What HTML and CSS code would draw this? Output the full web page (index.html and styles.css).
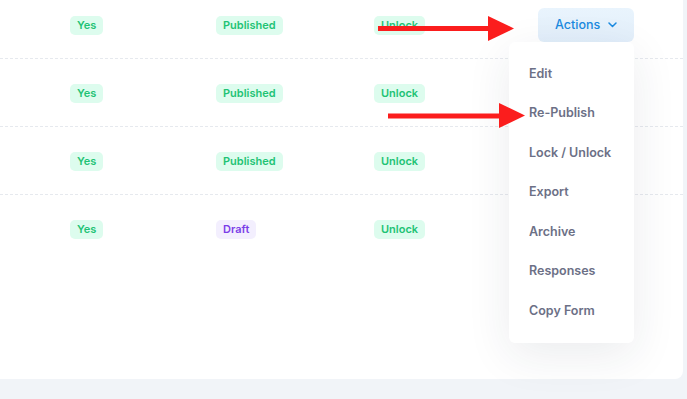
FILE: index.html
```html
<!DOCTYPE html>
<html>
<head>
<meta charset="utf-8">
<link rel="stylesheet" href="styles.css">
</head>
<body>
<div class="page">
  <div class="card">
    <div class="row">
      <div class="cell"><span class="badge green">Yes</span></div>
      <div class="cell"><span class="badge green">Published</span></div>
      <div class="cell"><span class="badge green">Unlock</span></div>
      <div class="cell">
        <button class="actions">Actions
          <svg class="chev" width="9" height="6" viewBox="0 0 9 6"><path d="M1 1l3.5 3.5L8 1" fill="none" stroke="currentColor" stroke-width="1.5" stroke-linecap="round" stroke-linejoin="round"/></svg>
        </button>
      </div>
    </div>
    <div class="row">
      <div class="cell"><span class="badge green">Yes</span></div>
      <div class="cell"><span class="badge green">Published</span></div>
      <div class="cell"><span class="badge green">Unlock</span></div>
      <div class="cell"></div>
    </div>
    <div class="row">
      <div class="cell"><span class="badge green">Yes</span></div>
      <div class="cell"><span class="badge green">Published</span></div>
      <div class="cell"><span class="badge green">Unlock</span></div>
      <div class="cell"></div>
    </div>
    <div class="row last">
      <div class="cell"><span class="badge green">Yes</span></div>
      <div class="cell"><span class="badge purple">Draft</span></div>
      <div class="cell"><span class="badge green">Unlock</span></div>
      <div class="cell"></div>
    </div>
  </div>

  <ul class="menu">
    <li>Edit</li>
    <li>Re-Publish</li>
    <li>Lock / Unlock</li>
    <li>Export</li>
    <li>Archive</li>
    <li>Responses</li>
    <li>Copy Form</li>
  </ul>

  <svg class="arrow arrow-1" width="138" height="26" viewBox="0 0 138 26">
    <rect x="0" y="10" width="114" height="5" fill="#fb1d1d"/>
    <polygon points="110,0 136,12.5 110,25" fill="#fb1d1d"/>
  </svg>
  <svg class="arrow arrow-2" width="138" height="26" viewBox="0 0 138 26">
    <rect x="0" y="10.5" width="114" height="5" fill="#fb1d1d"/>
    <polygon points="111,0 137,12.5 111,25" fill="#fb1d1d"/>
  </svg>
</div>
</body>
</html>
```

FILE: styles.css
```css
* { box-sizing: border-box; }
html, body {
  margin: 0;
  padding: 0;
  background: #f1f4f8;
  font-family: Inter, "Noto Sans", "Liberation Sans", sans-serif;
  overflow: hidden;
}
.page {
  position: relative;
  display: flow-root;
  width: 687px;
  height: 399px;
}
.card {
  width: 683px;
  margin-top: -9px;
  background: #ffffff;
  border-radius: 0 0 8px 0;
  padding-bottom: 116px;
}
.row {
  display: grid;
  grid-template-columns: 146px 158px 164px 1fr;
  padding-left: 70px;
  padding-top: 1px;
  height: 68px;
  align-items: center;
  border-bottom: 1px dashed #e6e9ee;
}
.row.last { border-bottom: 1px solid transparent; }
.cell {
  display: flex;
  align-items: center;
}
.badge {
  display: inline-block;
  font-size: 11px;
  font-weight: 600;
  line-height: 19px;
  height: 19px;
  padding: 0 7px;
  border-radius: 5px;
}
.badge.green {
  background: #ddfcee;
  color: #1fc375;
}
.badge.purple {
  background: #f3effe;
  color: #7b3ee8;
}
.actions {
  display: flex;
  align-items: center;
  gap: 8px;
  width: 96px;
  height: 34px;
  margin-top: -1px;
  padding: 0 0 0 17px;
  border: 0;
  border-radius: 6px;
  background: linear-gradient(180deg, #e9f4fd 0%, #e2eefa 100%);
  color: #1b8ae0;
  font-family: inherit;
  font-size: 12.5px;
  font-weight: 500;
}
.chev { margin-top: 1px; }
.menu {
  position: absolute;
  left: 509px;
  top: 42px;
  width: 125px;
  height: 301px;
  margin: 0;
  padding: 11.5px 0 0 20px;
  list-style: none;
  background: #ffffff;
  border-radius: 6px;
  box-shadow: 0 12px 45px rgba(30, 40, 70, 0.09);
}
.menu li {
  height: 39.5px;
  line-height: 39.5px;
  font-size: 12.5px;
  font-weight: 600;
  color: #6c7086;
  white-space: nowrap;
}
.arrow { position: absolute; }
.arrow-1 { left: 378px; top: 16px; }
.arrow-2 { left: 388px; top: 103px; }
```
